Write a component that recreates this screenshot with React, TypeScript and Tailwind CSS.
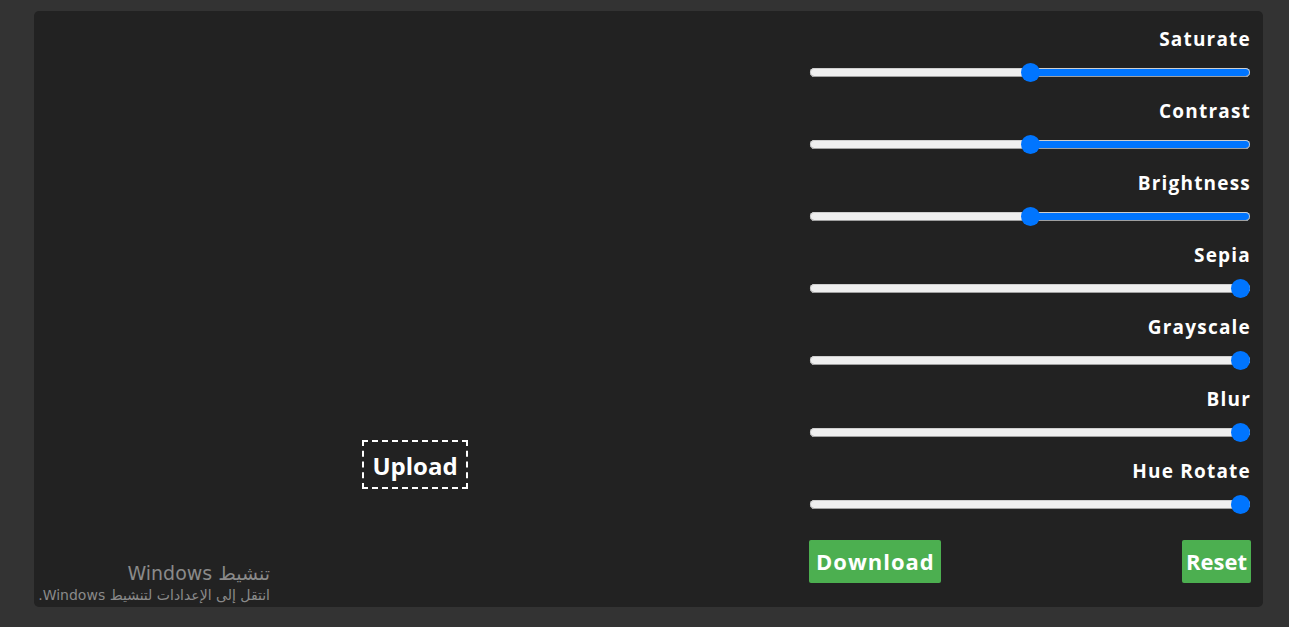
import React from "react";

const filters = [
  { name: "Saturate", value: 100, max: 200 },
  { name: "Contrast", value: 100, max: 200 },
  { name: "Brightness", value: 100, max: 200 },
  { name: "Sepia", value: 0, max: 100 },
  { name: "Grayscale", value: 0, max: 100 },
  { name: "Blur", value: 0, max: 10 },
  { name: "Hue Rotate", value: 0, max: 360 },
];

function Slider({ value, max }: { value: number; max: number }) {
  const p = value / max;
  const x = p === 0 ? 0 : 9.5 + p * (440 - 19);
  return (
    <input
      type="range"
      dir="rtl"
      min={0}
      max={max}
      defaultValue={value}
      className="block w-[440px] h-[9px] mt-[17px] mb-[22px] appearance-none rounded-full outline-none shadow-[inset_0_-1px_0_#a0a0a0,inset_0_0_0_1px_#cfcfcf] [&::-webkit-slider-thumb]:appearance-none [&::-webkit-slider-thumb]:w-[19px] [&::-webkit-slider-thumb]:h-[19px] [&::-webkit-slider-thumb]:rounded-full [&::-webkit-slider-thumb]:bg-[#0075ff] [&::-webkit-slider-thumb]:border-0"
      style={{
        background: `linear-gradient(to left, #0075ff 0px, #0075ff ${x}px, #efefef ${x}px, #efefef 100%)`,
      }}
    />
  );
}

export default function App() {
  return (
    <div className="w-full h-[627px] bg-[#333333] pl-[34px] pt-[11px] overflow-hidden" style={{ fontFamily: '"Open Sans", "Noto Sans", sans-serif' }}>
      <div className="relative w-[1229px] h-[596px] bg-[#222222] rounded-[5px] flex">
        <div className="w-[762px] flex justify-center pt-[429px]">
          <div className="h-[49px] px-[8px] border-[2px] border-dashed border-white flex items-center text-white text-[24px] font-bold pt-[2px]">
            Upload
          </div>
        </div>
        <div className="w-[442px] ml-[14px] pt-[16px] flex flex-col">
          {filters.map((f) => (
            <div key={f.name} className="flex flex-col w-[440px]">
              <div className="h-[24px] text-right text-white text-[19px] font-bold tracking-[1.2px] leading-[24px] -mr-[1px]">{f.name}</div>
              <Slider value={f.value} max={f.max} />
            </div>
          ))}
          <div className="flex justify-between w-[442px] -ml-[1px] mt-[9px]">
            <button className="h-[43px] pl-[7px] pr-[6px] bg-[#4CAF50] text-white text-[22px] font-bold tracking-[1px] rounded-[2px]">Download</button>
            <button className="h-[43px] px-[4px] bg-[#4CAF50] text-white text-[22px] font-bold rounded-[2px]">Reset</button>
          </div>
        </div>
        <div className="absolute left-0 bottom-[2px] w-[236px] text-right text-[#8a8a8a]" dir="rtl" style={{ fontFamily: '"DejaVu Sans", "Noto Sans", sans-serif' }}>
          <div className="text-[19px] leading-[24px]">تنشيط Windows</div>
          <div className="text-[14px] leading-[20px] whitespace-nowrap">انتقل إلى الإعدادات لتنشيط Windows.</div>
        </div>
      </div>
    </div>
  );
}
